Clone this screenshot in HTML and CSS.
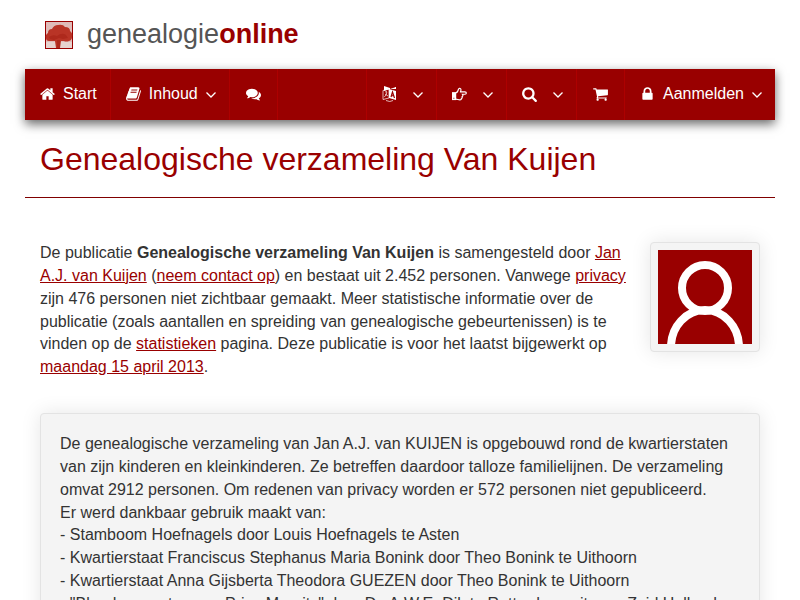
FILE: index.html
```html
<!DOCTYPE html>
<html lang="nl">

<head>
    <meta charset="UTF-8">
    <meta name="viewport" content="width=device-width, initial-scale=1.0">
    <title>Genealogische verzameling Van Kuijen</title>
    <link rel="stylesheet" href="styles.css">
</head>

<body>
    <div class="container">
        <header>
            <a href="#" class="logo">
                <svg class="logo-tree" viewBox="0 0 28 28" aria-hidden="true">
                    <rect x="0.500" y="0.500" width="27" height="27" fill="#dfbcb9" stroke="#990000" />
                    <path d="M1 21h26v6H1z" fill="#e6d3cf" />
                    <path d="M1 17q-1-3 2-5 0-4 4-4 2-4 6-4 5-1 7 2 5 0 5 4 3 2 2 6 0 3-3 4-3 1-5 0l-3 0-1 7h-4l-1-7-3 0-3 0q-3 0-3-3z" fill="#b93426" />
                    <path d="M4 16q4-3 8-1 5-4 9-1l2 3-5 1-4-1-5 2-4-1zM12 19h3v8h-3z" fill="#ae291c" />
                </svg>
                <span class="logo-text">genealogie<b>online</b></span>
            </a>
        </header>

        <nav class="navbar">
            <ul>
                <li>
                    <a href="#">
                        <svg class="icon" viewBox="64 0 1664 1792" aria-hidden="true"><path d="M1472 992v480q0 26-19 45t-45 19h-384v-384h-256v384h-384q-26 0-45-19t-19-45v-480q0-1 .5-3t.5-3l575-474 575 474q1 2 1 6zm223-69l-62 74q-8 9-21 11h-3q-13 0-21-7l-692-577-692 577q-12 8-24 7-13-2-21-11l-62-74q-8-10-7-23.500t11-21.500l719-599q32-26 76-26t76 26l244 204v-195q0-14 9-23t23-9h192q14 0 23 9t9 23v408l219 182q10 8 11 21.500t-7 23.500z" /></svg>
                        Start
                    </a>
                </li>
                <li>
                    <a href="#">
                        <svg class="icon" viewBox="64 0 1664 1792" aria-hidden="true"><path d="M1703 478q40 57 18 129l-275 906q-19 64-76.500 107.500t-122.500 43.500h-923q-77 0-148.500-53.500t-99.500-131.500q-24-67-2-127 0-4 3-27t4-37q1-8-3-21.500t-3-19.500q2-11 8-21t16.500-23.500 16.500-23.500q23-38 45-91.500t30-91.500q3-10 .5-30t-.5-28q3-11 17-28t17-23q21-36 42-92t25-90q1-9-2.500-32t.5-28q4-13 22-30.500t22-22.500q19-26 42.500-84.500t27.500-96.500q1-8-3-25.500t-2-26.500q2-8 9-18t18-23 17-21q8-12 16.500-30.500t15-35 16-36 19.500-32 26.500-23.500 36-11.500 47.500 5.500l-1 3q38-9 51-9h761q74 0 114 56t18 130l-274 906q-36 119-71.500 153.500t-128.500 34.500h-869q-27 0-38 15-11 16-1 43 24 70 144 70h923q29 0 56-15.500t35-41.500l300-987q7-22 5-57 38 15 59 43zm-1064 2q-4 13 2 22.500t20 9.500h608q13 0 25.500-9.500t16.500-22.500l21-64q4-13-2-22.500t-20-9.500h-608q-13 0-25.500 9.500t-16.500 22.500zm-83 256q-4 13 2 22.500t20 9.500h608q13 0 25.500-9.500t16.500-22.500l21-64q4-13-2-22.500t-20-9.500h-608q-13 0-25.500 9.500t-16.500 22.500z" /></svg>
                        Inhoud
                        <svg class="chevron" viewBox="0 0 10 6" aria-hidden="true"><path d="M.5 .5L5 5 9.500 .5" /></svg>
                    </a>
                </li>
                <li>
                    <a href="#" class="icon-only" aria-label="Forum">
                        <svg class="icon" viewBox="0 0 1792 1792" aria-hidden="true"><path d="M1408 768q0 139-94 257t-256.500 186.500-353.500 68.500q-86 0-176-16-124 88-278 128-36 9-86 16h-3q-11 0-20.500-8t-11.500-21q-1-3-1-6.500t.5-6.500 2-6l2.500-5 3.500-5.500 4-5 4.500-5 4-4.500q5-6 23-25t26-29.500 22.500-29 25-38.500 20.500-44q-124-72-195-177t-71-224q0-139 94-257t256.500-186.500 353.500-68.500 353.500 68.500 256.500 186.500 94 257zm384 256q0 120-71 224.500t-195 176.500q10 24 20.500 44t25 38.500 22.500 29 26 29.500 23 25q1 1 4 4.500t4.500 5 4 5 3.500 5.500l2.500 5 2 6 .5 6.500-1 6.500q-3 14-13 22t-22 7q-50-7-86-16-154-40-278-128-90 16-176 16-271 0-472-132 58 4 88 4 161 0 309-45t264-129q125-92 192-212t67-254q0-77-23-152 129 71 204 178t75 230z" /></svg>
                    </a>
                </li>
            </ul>
            <ul class="navbar-right">
                <li>
                    <a href="#" class="icon-menu" aria-label="Taal">
                        <svg class="icon" viewBox="0 0 15 16" aria-hidden="true">
                            <path d="M2 0l6 2v1L2 5zM8 3l6-2v2H8zM7 3l7 2v9l-7-2z" />
                            <path d="M1 4.500L7 3v9l-6 1.500zM13.500 1v2M3 6l2-.5M4.800 6q0 3-2.500 5M3 8l3 2M4 14.500q4 2 7 0" fill="none" stroke="#fff" stroke-width="0.700" />
                            <path d="M9 11l1.500-5 2 6M9.500 9.500l2.500 .5" fill="none" stroke="#990000" stroke-width="1.200" />
                        </svg>
                        <svg class="chevron" viewBox="0 0 10 6" aria-hidden="true"><path d="M.5 .5L5 5 9.500 .5" /></svg>
                    </a>
                </li>
                <li>
                    <a href="#" class="icon-menu" aria-label="Verwijzingen">
                        <svg class="icon" viewBox="0 0 16 16" aria-hidden="true">
                            <path d="M0 6h4.500v8.500H0z" />
                            <path d="M4 6.600C5.500 6.600 6.500 4.500 6.800 3.200 7.200 1.200 9.600 1.800 9.600 3.500 9.600 4.500 9 5.300 9 5.700h4.800c2 0 2 2.600 0 2.600h-2.600c.8 1 .5 2-.4 2.400.4 1 0 1.800-.8 2 .2 1.100-.6 1.500-1.500 1.500C6.500 14.200 6 13.500 4 13.500" fill="none" stroke="#fff" stroke-width="1.200" />
                            <path d="M1.500 12h1v1h-1z" fill="#990000" />
                        </svg>
                        <svg class="chevron" viewBox="0 0 10 6" aria-hidden="true"><path d="M.5 .5L5 5 9.500 .5" /></svg>
                    </a>
                </li>
                <li>
                    <a href="#" class="icon-menu" aria-label="Zoeken">
                        <svg class="icon" viewBox="64 0 1664 1792" aria-hidden="true"><path d="M1216 832q0-185-131.500-316.500t-316.500-131.500-316.500 131.500-131.500 316.500 131.500 316.500 316.500 131.500 316.500-131.500 131.500-316.500zm512 832q0 52-38 90t-90 38q-54 0-90-38l-343-342q-179 124-399 124-143 0-273.500-55.500t-225-150-150-225-55.500-273.500 55.500-273.500 150-225 225-150 273.500-55.500 273.500 55.500 225 150 150 225 55.500 273.500q0 220-124 399l343 343q37 37 37 90z" /></svg>
                        <svg class="chevron" viewBox="0 0 10 6" aria-hidden="true"><path d="M.5 .5L5 5 9.500 .5" /></svg>
                    </a>
                </li>
                <li>
                    <a href="#" class="icon-only" aria-label="Winkelwagen">
                        <svg class="icon" viewBox="64 0 1664 1792" aria-hidden="true"><path d="M704 1536q0 52-38 90t-90 38-90-38-38-90 38-90 90-38 90 38 38 90zm896 0q0 52-38 90t-90 38-90-38-38-90 38-90 90-38 90 38 38 90zm128-1088v512q0 24-16.500 42.500t-40.500 21.500l-1044 122q13 60 13 70 0 16-24 64h920q26 0 45 19t19 45-19 45-45 19h-1024q-26 0-45-19t-19-45q0-11 8-31.500t16-36 21.500-40 15.500-29.500l-177-823h-204q-26 0-45-19t-19-45 19-45 45-19h256q16 0 28.500 6.500t19.500 15.500 13 24.500 8 26 5.500 29.500 4.500 26h1201q26 0 45 19t19 45z" /></svg>
                    </a>
                </li>
                <li>
                    <a href="#">
                        <svg class="icon" viewBox="64 0 1664 1792" aria-hidden="true"><path d="M640 768h512v-192q0-106-75-181t-181-75-181 75-75 181v192zm832 96v576q0 40-28 68t-68 28h-960q-40 0-68-28t-28-68v-576q0-40 28-68t68-28h32v-192q0-184 132-316t316-132 316 132 132 316v192h32q40 0 68 28t28 68z" /></svg>
                        Aanmelden
                        <svg class="chevron" viewBox="0 0 10 6" aria-hidden="true"><path d="M.5 .5L5 5 9.500 .5" /></svg>
                    </a>
                </li>
            </ul>
        </nav>

        <h1>Genealogische verzameling Van Kuijen</h1>

        <main>
            <div class="intro">
                <p>De publicatie <b>Genealogische verzameling Van Kuijen</b> is samengesteld door <a href="#">Jan A.J. van Kuijen</a> (<a href="#">neem contact op</a>) en bestaat uit 2.452 personen. Vanwege <a href="#">privacy</a> zijn 476 personen niet zichtbaar gemaakt. Meer statistische informatie over de publicatie (zoals aantallen en spreiding van genealogische gebeurtenissen) is te vinden op de <a href="#">statistieken</a> pagina. Deze publicatie is voor het laatst bijgewerkt op <a href="#">maandag 15 april 2013</a>.</p>
                <div class="avatar">
                    <svg viewBox="0 0 94 94" role="img" aria-label="Auteur">
                        <rect width="94" height="94" fill="#990000" />
                        <circle cx="47" cy="38" r="23" />
                        <path d="M13 97a34 37 0 0 1 68 0" />
                    </svg>
                </div>
            </div>

            <div class="well">
                De genealogische verzameling van Jan A.J. van KUIJEN is opgebouwd rond de kwartierstaten van zijn kinderen en kleinkinderen. Ze betreffen daardoor talloze familielijnen. De verzameling omvat 2912 personen. Om redenen van privacy worden er 572 personen niet gepubliceerd.<br>
                Er werd dankbaar gebruik maakt van:<br>
                - Stamboom Hoefnagels door Louis Hoefnagels te Asten<br>
                - Kwartierstaat Franciscus Stephanus Maria Bonink door Theo Bonink te Uithoorn<br>
                - Kwartierstaat Anna Gijsberta Theodora GUEZEN door Theo Bonink te Uithoorn<br>
                - "Bloedverwanten van Prins Maurits" door Dr. A.W.E. Dik te Rotterdam, uitgave Zuid Holland
            </div>
        </main>
    </div>
</body>

</html>
```

FILE: styles.css
```css
* {
    box-sizing: border-box;
}

body {
    margin: 0;
    background-color: white;
    color: #333;
    font-family: "Liberation Sans", Arial, sans-serif;
    font-size: 16px;
    line-height: 1.428571429;
}

a {
    color: #990000;
}

.container {
    max-width: 1170px;
    margin: 0 auto;
    padding: 0 25px;
}

/* Logo */
header {
    padding: 18px 20px;
}

.logo {
    display: flex;
    align-items: center;
    gap: 14px;
    height: 33px;
    color: #555;
    text-decoration: none;
}

.logo-tree {
    width: 28px;
    height: 28px;
}

.logo-text {
    padding-bottom: 2px;
    font-size: 27px;
    line-height: 32px;
}

.logo-text b {
    color: #990000;
}

/* Navigation */
.navbar {
    display: flex;
    justify-content: space-between;
    background-color: #990000;
    box-shadow: 0 4px 10px rgba(0, 0, 0, 0.6);
}

.navbar ul {
    display: flex;
    margin: 0;
    padding: 0;
    list-style: none;
}

.navbar li {
    border-right: 1px solid #ad0000;
}

.navbar-right li:first-child {
    border-left: 1px solid #ad0000;
}

.navbar-right li:last-child {
    border-right: none;
}

.navbar a {
    display: flex;
    align-items: center;
    gap: 8px;
    height: 51px;
    padding: 0 13px 0 15px;
    color: white;
    text-decoration: none;
}

.navbar .icon-menu {
    gap: 16px;
}

.navbar .icon-only {
    padding: 0 16px;
}

.navbar a:hover {
    background-color: #800000;
}

.icon {
    width: 15px;
    height: 16px;
    margin-bottom: 2px;
    fill: white;
}

.chevron {
    width: 10px;
    height: 6px;
    margin-top: 1px;
    fill: none;
    stroke: white;
    stroke-width: 1.3;
}

/* Title */
h1 {
    margin: 20px 0 44px;
    padding: 0 15px 19px;
    border-bottom: 1px solid #800000;
    color: #990000;
    font-size: 32px;
    font-weight: normal;
    line-height: 38px;
}

/* Content */
main {
    padding: 0 15px;
}

.intro {
    display: flex;
    align-items: flex-start;
    gap: 20px;
    margin-bottom: 34px;
}

.intro p {
    flex: 1;
    margin: 0;
}

.avatar,
.well {
    background-color: #f4f4f4;
    border: 1px solid #e3e3e3;
    border-radius: 4px;
    box-shadow: 0 0 20px rgba(0, 0, 0, 0.1);
}

.avatar {
    padding: 7px;
}

.avatar svg {
    display: block;
    width: 94px;
    height: 94px;
}

.avatar circle,
.avatar path {
    fill: none;
    stroke: white;
    stroke-width: 8;
}

.well {
    padding: 19px;
}
```
